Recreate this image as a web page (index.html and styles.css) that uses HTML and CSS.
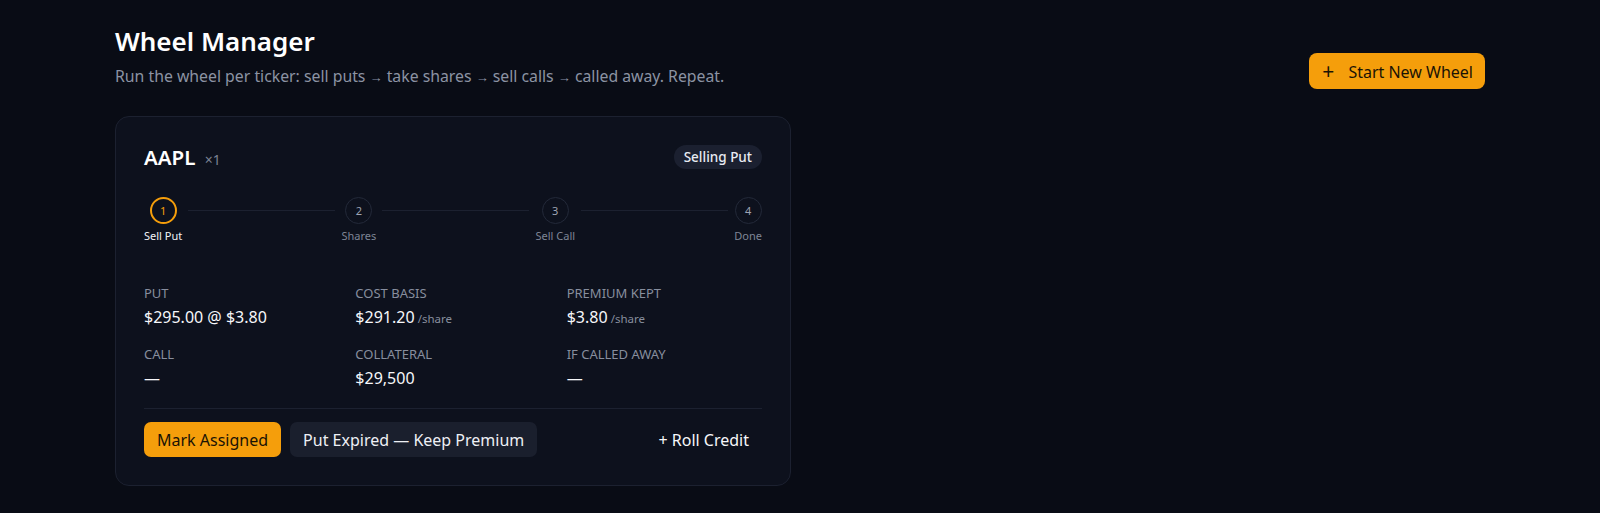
FILE: index.html
```html
<!DOCTYPE html>
<html lang="en">
<head>
    <meta charset="UTF-8">
    <meta name="viewport" content="width=device-width, initial-scale=1.0">
    <title>Wheel Manager</title>
    <link rel="stylesheet" href="styles.css">
</head>
<body>
    <div class="page">
        <!-- Header -->
        <div class="page-header">
            <div class="title-block">
                <h1>Wheel Manager</h1>
                <p class="subtitle">Run the wheel per ticker: sell puts <span class="arr">&#8594;</span> take shares <span class="arr">&#8594;</span> sell calls <span class="arr">&#8594;</span> called away. Repeat.</p>
            </div>
            <button class="primary-btn start-btn"><span class="plus">+</span>Start New Wheel</button>
        </div>

        <!-- Wheel card -->
        <div class="wheel-card">
            <div class="card-head">
                <div class="ticker">AAPL <span class="qty">&times;1</span></div>
                <span class="badge">Selling Put</span>
            </div>

            <div class="stepper">
                <div class="step active">
                    <div class="dot">1</div>
                    <div class="step-label">Sell Put</div>
                </div>
                <div class="step-line"></div>
                <div class="step">
                    <div class="dot">2</div>
                    <div class="step-label">Shares</div>
                </div>
                <div class="step-line"></div>
                <div class="step">
                    <div class="dot">3</div>
                    <div class="step-label">Sell Call</div>
                </div>
                <div class="step-line"></div>
                <div class="step">
                    <div class="dot">4</div>
                    <div class="step-label">Done</div>
                </div>
            </div>

            <div class="stats">
                <div class="stat">
                    <div class="stat-label">Put</div>
                    <div class="stat-value">$295.00 @ $3.80</div>
                </div>
                <div class="stat">
                    <div class="stat-label">Cost Basis</div>
                    <div class="stat-value">$291.20 <span class="unit">/share</span></div>
                </div>
                <div class="stat">
                    <div class="stat-label">Premium Kept</div>
                    <div class="stat-value">$3.80 <span class="unit">/share</span></div>
                </div>
                <div class="stat">
                    <div class="stat-label">Call</div>
                    <div class="stat-value">&mdash;</div>
                </div>
                <div class="stat">
                    <div class="stat-label">Collateral</div>
                    <div class="stat-value">$29,500</div>
                </div>
                <div class="stat">
                    <div class="stat-label">If Called Away</div>
                    <div class="stat-value">&mdash;</div>
                </div>
            </div>

            <div class="card-actions">
                <button class="primary-btn">Mark Assigned</button>
                <button class="secondary-btn">Put Expired &mdash; Keep Premium</button>
                <button class="ghost-btn">+ Roll Credit</button>
            </div>
        </div>
    </div>
</body>
</html>
```

FILE: styles.css
```css
body {
    font-family: 'Noto Sans', sans-serif;
    background-color: #090c15;
    color: #f1f3f7;
    margin: 0;
}

.page {
    padding: 24px 115px 0 115px;
}

/* Header */
.page-header {
    display: flex;
    justify-content: space-between;
    align-items: flex-start;
    margin-bottom: 27px;
}

h1 {
    margin: 0;
    font-size: 26px;
    font-weight: 600;
    line-height: 34px;
    color: #ffffff;
}

.subtitle {
    margin: 6px 0 0;
    font-size: 15.8px;
    line-height: 24px;
    color: #8c93a3;
}

.subtitle .arr {
    font-size: 13px;
}

.primary-btn {
    font-family: inherit;
    font-size: 16px;
    color: #1a1305;
    background-color: #f59e0b;
    border: none;
    border-radius: 7px;
    padding: 0 13px;
    height: 35px;
    cursor: pointer;
}

.start-btn {
    margin-top: 29px;
    height: 36px;
    padding: 0 12px 0 13px;
    border-radius: 8px;
}

.start-btn .plus {
    font-size: 21px;
    margin-right: 14px;
    vertical-align: -1px;
}

/* Card */
.wheel-card {
    width: 618px;
    border: 1px solid #1c2130;
    border-radius: 14px;
    background-color: #0d111d;
    padding: 26px 28px 28px 28px;
}

.card-head {
    display: flex;
    justify-content: space-between;
    align-items: center;
    height: 28px;
}

.ticker {
    font-size: 20.5px;
    font-weight: 600;
    color: #ffffff;
}

.ticker .qty {
    font-size: 14px;
    font-weight: 400;
    color: #7b8293;
    margin-left: 4px;
}

.badge {
    background-color: #1b2030;
    color: #e8ebf2;
    font-size: 13.5px;
    font-weight: 500;
    padding: 0 10px;
    border-radius: 12px;
    line-height: 24px;
}

/* Stepper */
.stepper {
    display: flex;
    align-items: flex-start;
    margin-top: 26px;
}

.step {
    display: flex;
    flex-direction: column;
    align-items: center;
}

.dot {
    width: 25px;
    height: 25px;
    border: 1px solid #232939;
    border-radius: 50%;
    display: flex;
    align-items: center;
    justify-content: center;
    font-size: 11px;
    color: #9ea4b3;
}

.step-label {
    margin-top: 4px;
    font-size: 11px;
    line-height: 15px;
    color: #7e8595;
}

.step.active .dot {
    border: 2px solid #f59e0b;
    width: 23px;
    height: 23px;
    color: #f59e0b;
}

.step.active .step-label {
    color: #f1f3f7;
}

.step-line {
    flex: 1;
    height: 1px;
    background-color: #1c2130;
    margin: 13px 6px 0;
}

/* Stats */
.stats {
    display: grid;
    grid-template-columns: repeat(3, 1fr);
    column-gap: 16px;
    row-gap: 16px;
    margin-top: 42px;
}

.stat-label {
    font-size: 13px;
    text-transform: uppercase;
    color: #878e9e;
    line-height: 17px;
}

.stat-value {
    margin-top: 4px;
    font-size: 16px;
    font-weight: 400;
    color: #f6f7fa;
    line-height: 22px;
}

.stat-value .unit {
    font-size: 11.5px;
    color: #878e9e;
    margin-left: -1px;
}

/* Actions */
.card-actions {
    display: flex;
    align-items: center;
    gap: 9px;
    margin-top: 19px;
    padding-top: 13px;
    border-top: 1px solid #1c2130;
}

.secondary-btn {
    font-family: inherit;
    font-size: 16px;
    color: #eef0f5;
    background-color: #1a1f2d;
    border: none;
    border-radius: 7px;
    padding: 0 13px;
    height: 35px;
    cursor: pointer;
}

.ghost-btn {
    font-family: inherit;
    font-size: 16px;
    color: #f6f7fa;
    background: none;
    border: none;
    padding: 0 13px;
    height: 35px;
    margin-left: auto;
    cursor: pointer;
}
```
